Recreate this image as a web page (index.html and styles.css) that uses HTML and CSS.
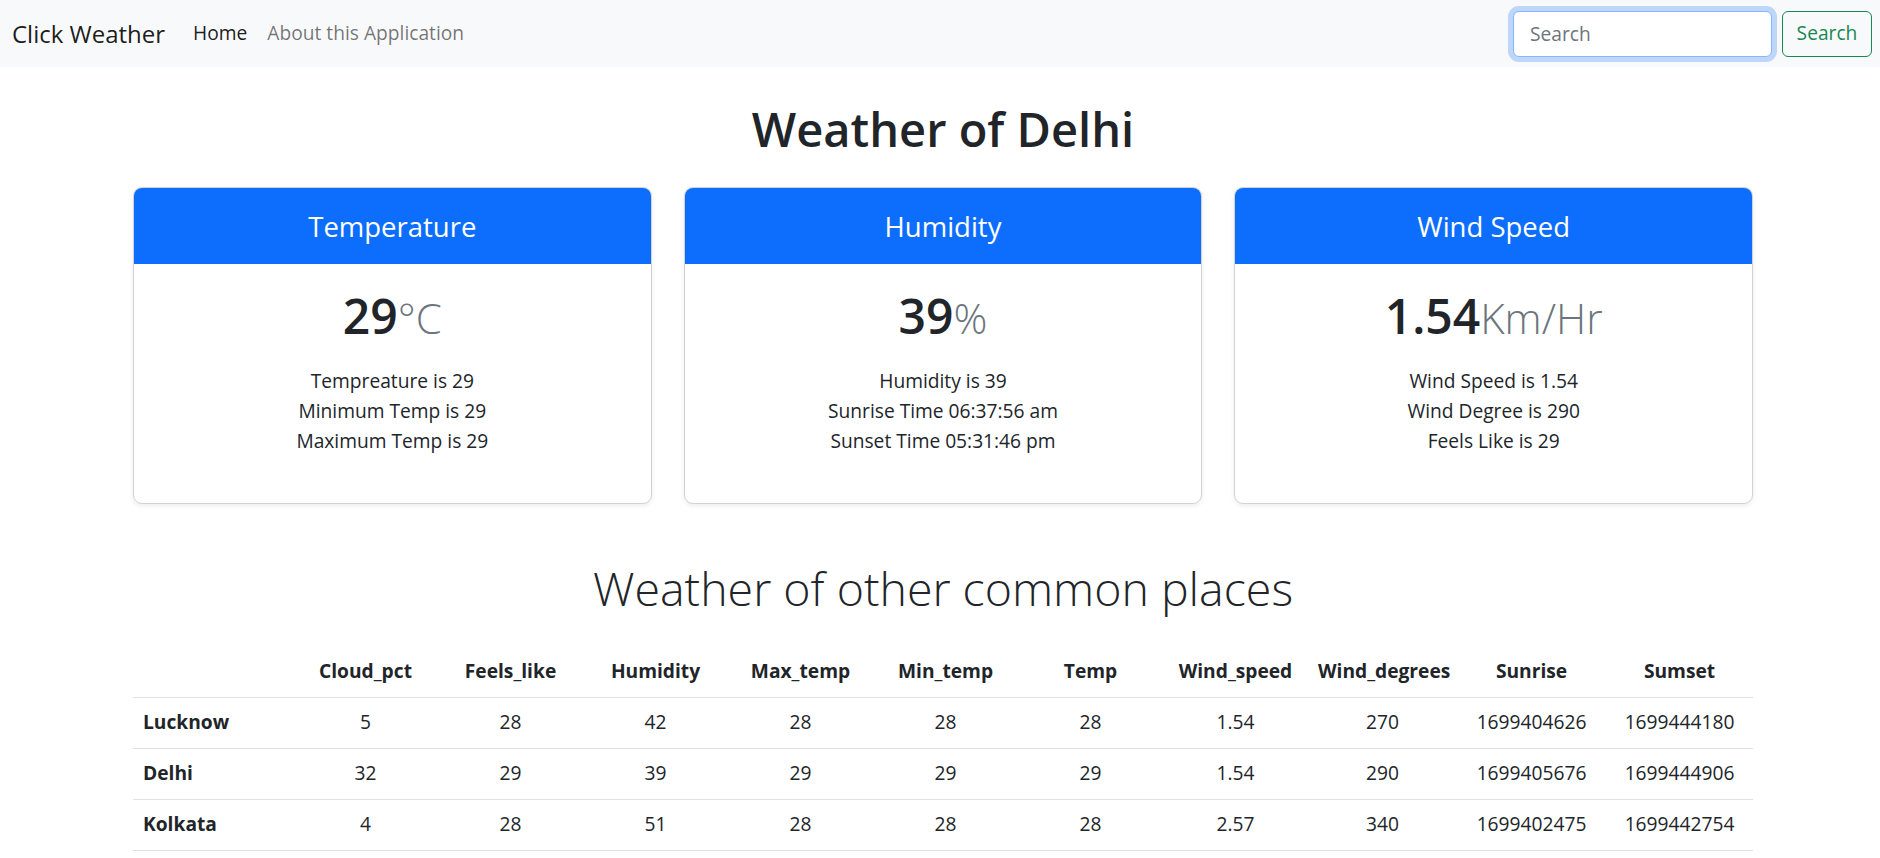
FILE: index.html
```html
<!DOCTYPE html>
<html lang="en">
<head>
<meta charset="utf-8">
<title>Click Weather</title>
<link rel="stylesheet" href="styles.css">
</head>
<body>
<nav class="navbar">
  <a class="brand" href="#">Click Weather</a>
  <ul class="nav">
    <li><a class="nav-link active" href="#">Home</a></li>
    <li><a class="nav-link" href="#">About this Application</a></li>
  </ul>
  <form class="search">
    <input class="search-input" type="search" placeholder="Search">
    <button class="search-btn" type="button">Search</button>
  </form>
</nav>

<main class="container">
  <h1 class="title">Weather of Delhi</h1>

  <div class="cards">
    <div class="card">
      <div class="card-header"><h4>Temperature</h4></div>
      <div class="card-body">
        <h1 class="value">29<small>°C</small></h1>
        <ul class="facts">
          <li>Tempreature is 29</li>
          <li>Minimum Temp is 29</li>
          <li>Maximum Temp is 29</li>
        </ul>
      </div>
    </div>
    <div class="card">
      <div class="card-header"><h4>Humidity</h4></div>
      <div class="card-body">
        <h1 class="value">39<small>%</small></h1>
        <ul class="facts">
          <li>Humidity is 39</li>
          <li>Sunrise Time 06:37:56 am</li>
          <li>Sunset Time 05:31:46 pm</li>
        </ul>
      </div>
    </div>
    <div class="card">
      <div class="card-header"><h4>Wind Speed</h4></div>
      <div class="card-body">
        <h1 class="value">1.54<small>Km/Hr</small></h1>
        <ul class="facts">
          <li>Wind Speed is 1.54</li>
          <li>Wind Degree is 290</li>
          <li>Feels Like is 29</li>
        </ul>
      </div>
    </div>
  </div>

  <h2 class="subtitle">Weather of other common places</h2>

  <table class="table">
    <colgroup>
      <col class="c-name"><col class="c-std"><col class="c-std"><col class="c-std"><col class="c-std"><col class="c-std"><col class="c-std"><col class="c-wd"><col class="c-wdeg"><col class="c-sr"><col class="c-ss">
    </colgroup>
    <thead>
      <tr>
        <th></th><th>Cloud_pct</th><th>Feels_like</th><th>Humidity</th><th>Max_temp</th><th>Min_temp</th><th>Temp</th><th>Wind_speed</th><th>Wind_degrees</th><th>Sunrise</th><th>Sumset</th>
      </tr>
    </thead>
    <tbody>
      <tr>
        <th class="place">Lucknow</th><td>5</td><td>28</td><td>42</td><td>28</td><td>28</td><td>28</td><td>1.54</td><td>270</td><td>1699404626</td><td>1699444180</td>
      </tr>
      <tr>
        <th class="place">Delhi</th><td>32</td><td>29</td><td>39</td><td>29</td><td>29</td><td>29</td><td>1.54</td><td>290</td><td>1699405676</td><td>1699444906</td>
      </tr>
      <tr>
        <th class="place">Kolkata</th><td>4</td><td>28</td><td>51</td><td>28</td><td>28</td><td>28</td><td>2.57</td><td>340</td><td>1699402475</td><td>1699442754</td>
      </tr>
    </tbody>
  </table>
</main>
</body>
</html>
```
FILE: styles.css
```css
* { box-sizing: border-box; }

body {
  margin: 0;
  font-family: "Segoe UI", "Open Sans", "Noto Sans", sans-serif;
  font-size: 19.2px;
  line-height: 1.5;
  color: #212529;
  background: #fff;
}

/* Navbar */
.navbar {
  height: 67px;
  background: #f8f9fa;
  display: flex;
  align-items: center;
  padding: 0 8px 0 12px;
}
.brand {
  font-size: 24px;
  color: rgba(0, 0, 0, 0.9);
  text-decoration: none;
  margin-right: 28px;
}
.nav {
  list-style: none;
  margin: 0;
  padding: 0;
  display: flex;
  gap: 20px;
}
.nav-link {
  color: rgba(0, 0, 0, 0.55);
  text-decoration: none;
}
.nav-link.active { color: rgba(0, 0, 0, 0.9); }

.search {
  margin-left: auto;
  display: flex;
  gap: 10px;
}
.search-input {
  width: 259px;
  height: 46px;
  border: 1px solid #86b7fe;
  border-radius: 6px;
  box-shadow: 0 0 0 5px rgba(13, 110, 253, 0.25);
  padding: 0 16px;
  font: inherit;
  color: #212529;
  background: #fff;
  outline: none;
}
.search-input::placeholder { color: #6c757d; }
.search-btn {
  width: 90px;
  height: 46px;
  border: 1px solid #198754;
  border-radius: 6px;
  background: transparent;
  color: #198754;
  font: inherit;
  padding: 0;
}

/* Main */
.container {
  width: 1620px;
  margin-left: 133px;
}
.title {
  margin: 34px 0 30px;
  font-size: 47px;
  line-height: 1.2;
  font-weight: 600;
  text-align: center;
}

.cards {
  display: grid;
  grid-template-columns: repeat(3, 1fr);
  gap: 32px;
}
.card {
  border: 1px solid rgba(0, 0, 0, 0.175);
  border-radius: 9px;
  box-shadow: 0 2px 5px rgba(0, 0, 0, 0.075);
  overflow: hidden;
  height: 317px;
  text-align: center;
}
.card-header {
  height: 76px;
  background: #0d6efd;
  color: #fff;
  display: flex;
  align-items: center;
  justify-content: center;
}
.card-header h4 {
  margin: 0;
  font-size: 27.5px;
  font-weight: 400;
  line-height: 1.2;
}
.card-body { padding: 23px 19px 0; }
.value {
  margin: 0;
  font-size: 48px;
  line-height: 1.2;
  font-weight: 600;
}
.value small {
  font-size: 0.875em;
  font-weight: 300;
  color: #6c757d;
}
.facts {
  list-style: none;
  margin: 21px 0 0;
  padding: 0;
  line-height: 30px;
}

.subtitle {
  margin: 57px 0 29px;
  font-size: 46.5px;
  line-height: 1.2;
  font-weight: 300;
  text-align: center;
}

/* Table */
.table {
  width: 1620px;
  border-collapse: collapse;
  table-layout: fixed;
}
.c-name { width: 160px; }
.c-std { width: 145px; }
.c-wd { width: 145px; }
.c-wdeg { width: 149px; }
.c-sr { width: 149px; }
.c-ss { width: 147px; }
.table th, .table td {
  height: 51px;
  padding: 0 10px;
  text-align: center;
  vertical-align: middle;
  border-bottom: 1px solid #dee2e6;
  white-space: nowrap;
}
.table th { font-weight: 700; }
.table th.place { text-align: left; }
```
